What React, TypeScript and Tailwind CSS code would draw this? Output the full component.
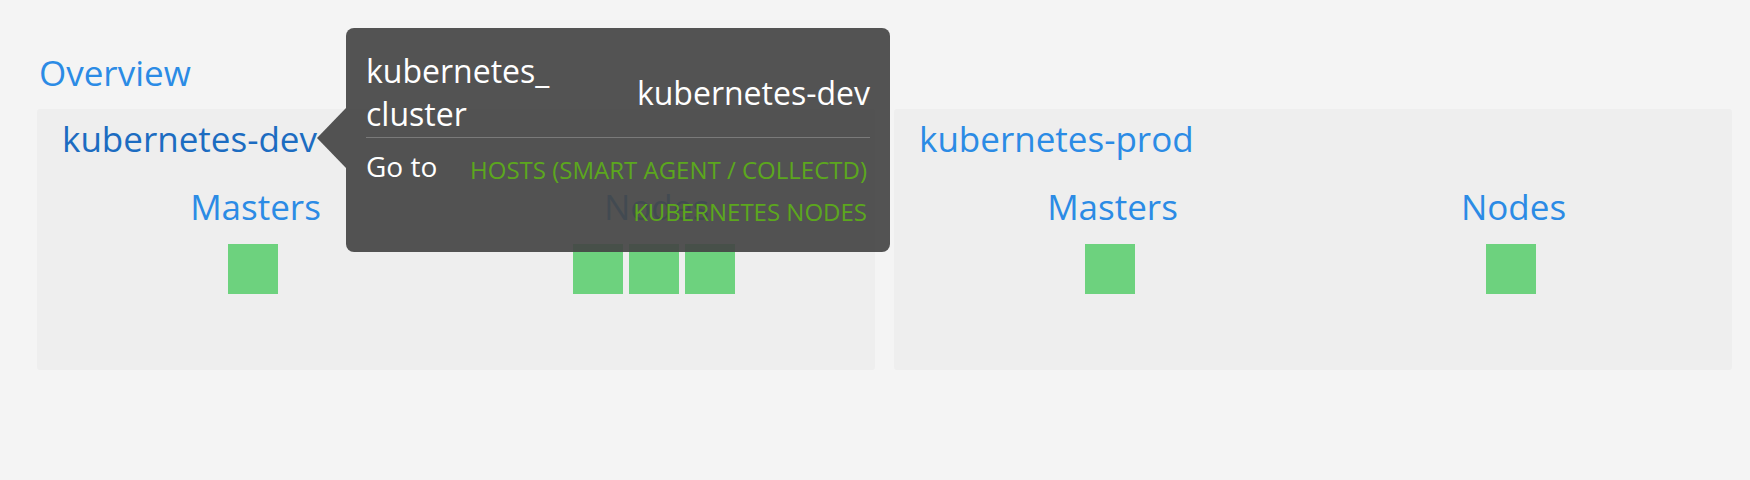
import type { ReactNode } from "react";

type Cluster = {
  name: string;
  masters: number;
  nodes: number;
  hovered?: boolean;
};

const clusters: Cluster[] = [
  { name: "kubernetes-dev", masters: 1, nodes: 3, hovered: true },
  { name: "kubernetes-prod", masters: 1, nodes: 1 },
];

function Column({ label, count }: { label: string; count: number }) {
  return (
    <div className="flex flex-col items-center">
      <div className="text-[35px] leading-[48px] text-[#2b8be5]">{label}</div>
      <div className="mt-[13px] mr-[6px] flex gap-[6px]">
        {Array.from({ length: count }).map((_, i) => (
          <div key={i} className="h-[50px] w-[50px] bg-[#6dd27e]" />
        ))}
      </div>
    </div>
  );
}

function ClusterPanel({ cluster }: { cluster: Cluster }) {
  return (
    <div className="h-[261px] flex-1 rounded-[3px] bg-[#eeeeee] px-[18px] pt-[6px]">
      <div
        className={`pl-[7px] text-[35px] leading-[48px] ${cluster.hovered ? "text-[#1c6cc1]" : "text-[#2b8be5]"}`}
      >
        {cluster.name}
      </div>
      <div className="mt-[20px] grid grid-cols-2">
        <Column label="Masters" count={cluster.masters} />
        <Column label="Nodes" count={cluster.nodes} />
      </div>
    </div>
  );
}

function Tooltip({ children }: { children: ReactNode }) {
  return (
    <div className="absolute left-[346px] top-[28px] h-[224px] w-[544px] rounded-lg bg-[rgba(68,68,68,0.92)] px-[20px] pt-[21px]">
      <div className="absolute left-[-29px] top-[80px] h-0 w-0 border-y-[30px] border-r-[29px] border-y-transparent border-r-[rgba(68,68,68,0.92)]" />
      {children}
    </div>
  );
}

export default function App() {
  return (
    <div className="relative h-[480px] w-full bg-[#f4f4f4] font-['Open_Sans',sans-serif]">
      <div className="pl-[39px] pt-[49px] text-[35px] leading-[48px] text-[#2b8be5]">
        Overview
      </div>
      <div className="mt-[12px] flex gap-[19px] pl-[37px] pr-[18px]">
        {clusters.map((c) => (
          <ClusterPanel key={c.name} cluster={c} />
        ))}
      </div>

      <Tooltip>
        <div className="flex items-center justify-between text-[32px] text-white">
          <div className="leading-[43px]">
            <div>kubernetes_</div>
            <div>cluster</div>
          </div>
          <div className="leading-[43px]">kubernetes-dev</div>
        </div>
        <div className="mt-[2px] border-t border-[#7a7a7a]" />
        <div className="flex items-start justify-between">
          <div className="mt-[8px] text-[28px] leading-[40px] text-white">Go to</div>
          <div className="mt-[11px] pr-[3px] text-right text-[24px] uppercase leading-[42px] text-[#5ca71d]">
            <div>Hosts (Smart Agent / CollectD)</div>
            <div>Kubernetes Nodes</div>
          </div>
        </div>
      </Tooltip>
    </div>
  );
}
